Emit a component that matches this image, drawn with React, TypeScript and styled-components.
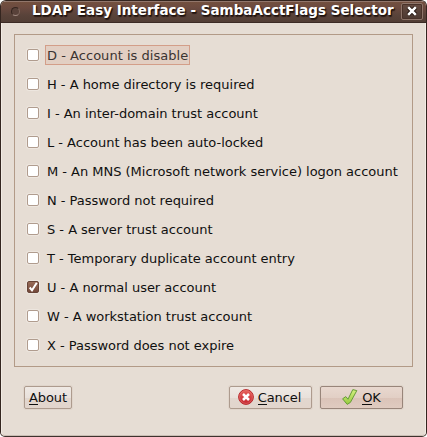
import React from "react";
import styled, { createGlobalStyle } from "styled-components";

const GlobalStyle = createGlobalStyle`
  html, body { margin: 0; padding: 0; background: #fff; overflow: hidden; }
  * { box-sizing: border-box; }
`;

const Window = styled.main`
  width: 427px;
  height: 437px;
  display: flex;
  flex-direction: column;
  overflow: hidden;
  border: 1px solid #34251f;
  border-bottom-color: #3e322d;
  border-radius: 6px 6px 5px 5px;
  background: #e6ddd4;
  color: #101010;
  font-family: "DejaVu Sans", sans-serif;
  font-size: 13px;
`;

const TitleBar = styled.header`
  flex: none;
  height: 22px;
  display: flex;
  align-items: center;
  padding: 0 3px 1px 10px;
  border-top: 1px solid #91766b;
  border-bottom: 1px solid #3c2b25;
  background: linear-gradient(#73503f 0, #6b4a40 30%, #59433a 65%, #523e35 100%);
`;

const MenuDot = styled.span`
  flex: none;
  width: 9px;
  height: 9px;
  margin-bottom: 1px;
  border-radius: 50%;
  border: 1px solid #35251f;
  border-bottom-color: #a08a80;
  border-right-color: #80685e;
  background: #59423a;
`;

const Title = styled.h1`
  flex: 1;
  min-width: 0;
  margin: 0 0 3px 12px;
  font-size: 13.5px;
  line-height: 18px;
  font-weight: bold;
  color: #fff;
  white-space: nowrap;
  text-shadow: 1px 1px 1px #1c110d, 1px 2px 1px #2d1d18;
`;

const CloseButton = styled.button`
  flex: none;
  width: 22px;
  height: 17px;
  display: grid;
  place-items: center;
  padding: 0 1px 1px 0;
  border: 1px solid #8d756a;
  border-radius: 2px;
  background: linear-gradient(#654b41, #4c3931);
  box-shadow: inset 0 0 0 1px #493229;
`;

const Content = styled.div`
  flex: 1;
  display: flex;
  flex-direction: column;
  border: 1px solid #f2ebe4;
  border-top: 0;
  border-bottom-color: #c9bdb3;
  border-radius: 0 0 4px 4px;
  padding: 11px 12px 0;
`;

const Options = styled.section`
  height: 333px;
  border: 1px solid #b29a87;
  padding: 10px 0 0 12px;
`;

const Option = styled.label`
  height: 20px;
  margin-bottom: 9px;
  display: flex;
  align-items: center;
  gap: 6px;
`;

const Check = styled.span<{ $checked: boolean }>`
  flex: none;
  width: 12px;
  height: 12px;
  display: grid;
  border: 1px solid ${(p) => (p.$checked ? "#674437" : "#b09c8e")};
  border-radius: 2px;
  background: ${(p) => (p.$checked ? "linear-gradient(#986b58, #74483a)" : "#fff")};
  box-shadow: 0 0 0 1px #ede6df;
`;

const OptionText = styled.span<{ $focused: boolean }>`
  height: 20px;
  padding: 0 1px;
  border: 1px solid ${(p) => (p.$focused ? "#d39e89" : "transparent")};
  background: ${(p) => (p.$focused ? "#e2cfc3" : "transparent")};
  color: ${(p) => (p.$focused ? "#3b3432" : "#101010")};
  line-height: 19px;
  letter-spacing: ${(p) => (p.$focused ? "0.03px" : "-0.02px")};
  white-space: nowrap;
`;

const Actions = styled.footer`
  display: flex;
  gap: 8px;
  padding: 19px 10px 0 10px;
`;

const Button = styled.button<{ $width: number; $primary?: boolean; $end?: boolean }>`
  width: ${(p) => p.$width}px;
  height: 23px;
  margin-left: ${(p) => (p.$end ? "auto" : "0")};
  display: flex;
  align-items: center;
  justify-content: center;
  gap: 4px;
  padding: 0 ${(p) => (p.$end ? 2 : 0)}px 1px 0;
  border: 1px solid ${(p) => (p.$primary ? "#98857a" : "#ad9b8e")};
  border-radius: 2px;
  background: ${(p) =>
    p.$primary
      ? "linear-gradient(#e8d8cf 0, #e2cfc5 50%, #dac3b8 51%, #dfcbc0 100%)"
      : "linear-gradient(#efe9e4 0, #e9e1db 50%, #e2d7cf 51%, #e2d5cc 100%)"};
  box-shadow: 0 0 0 1px #e0d5cb;
  color: #101010;
  font: 13px/21px "DejaVu Sans", sans-serif;
`;

const Caption = styled.span`
  display: flex;
  height: 16px;
  line-height: 18px;
  letter-spacing: -0.1px;
`;

const Mnemonic = styled.span`
  height: 16px;
  border-bottom: 1px solid #101010;
`;

const CloseGlyph = () => (
  <svg width="12" height="12" viewBox="0 0 12 12">
    <path d="M2.2 2.2L9.8 9.8M9.8 2.2L2.2 9.8" stroke="#21140f" strokeWidth="4.2" />
    <path d="M2.2 2.2L9.8 9.8M9.8 2.2L2.2 9.8" stroke="#fff" strokeWidth="2.5" />
  </svg>
);

const Tick = () => (
  <svg width="10" height="10" viewBox="0 0 10 10">
    <path d="M1.7 5.5L4 8.3L8.8 .8" fill="none" stroke="#fff" strokeWidth="2" />
  </svg>
);

const CancelIcon = () => (
  <svg width="16" height="16" viewBox="0 0 16 16">
    <defs>
      <linearGradient id="red" x2="0" y2="1">
        <stop stopColor="#e8635c" />
        <stop offset="1" stopColor="#c3232e" />
      </linearGradient>
    </defs>
    <circle cx="8" cy="8" r="7.4" fill="url(#red)" stroke="#b72b2e" />
    <circle cx="8" cy="8" r="6.4" fill="none" stroke="#ee8580" strokeWidth=".8" opacity=".6" />
    <path d="M5 5L11 11M11 5L5 11" stroke="#fff" strokeWidth="2.5" />
  </svg>
);

const OkIcon = () => (
  <svg width="16" height="16" viewBox="0 0 16 16">
    <defs>
      <linearGradient id="green" x2="0" y2="1">
        <stop stopColor="#d3f080" />
        <stop offset="1" stopColor="#98cb40" />
      </linearGradient>
    </defs>
    <path d="M.6 9.8L3.8 7.6L6 10.2L10.8 .6L14.8 1.6L8.4 13.4L5.2 15.4Z" fill="url(#green)" stroke="#679c3a" strokeLinejoin="round" />
  </svg>
);

const flags = [
  "D - Account is disable",
  "H - A home directory is required",
  "I - An inter-domain trust account",
  "L - Account has been auto-locked",
  "M - An MNS (Microsoft network service) logon account",
  "N - Password not required",
  "S - A server trust account",
  "T - Temporary duplicate account entry",
  "U - A normal user account",
  "W - A workstation trust account",
  "X - Password does not expire",
];

export default function App() {
  return (
    <>
      <GlobalStyle />
      <Window>
        <TitleBar>
          <MenuDot />
          <Title>LDAP Easy Interface - SambaAcctFlags Selector</Title>
          <CloseButton aria-label="Close"><CloseGlyph /></CloseButton>
        </TitleBar>
        <Content>
          <Options>
            {flags.map((flag) => (
              <Option key={flag}>
                <Check $checked={flag[0] === "U"}>{flag[0] === "U" && <Tick />}</Check>
                <OptionText $focused={flag[0] === "D"}>{flag}</OptionText>
              </Option>
            ))}
          </Options>
          <Actions>
            <Button $width={48}><Caption><Mnemonic>A</Mnemonic>bout</Caption></Button>
            <Button $width={83} $end><CancelIcon /><Caption><Mnemonic>C</Mnemonic>ancel</Caption></Button>
            <Button $width={83} $primary><OkIcon /><Caption><Mnemonic>O</Mnemonic>K</Caption></Button>
          </Actions>
        </Content>
      </Window>
    </>
  );
}
